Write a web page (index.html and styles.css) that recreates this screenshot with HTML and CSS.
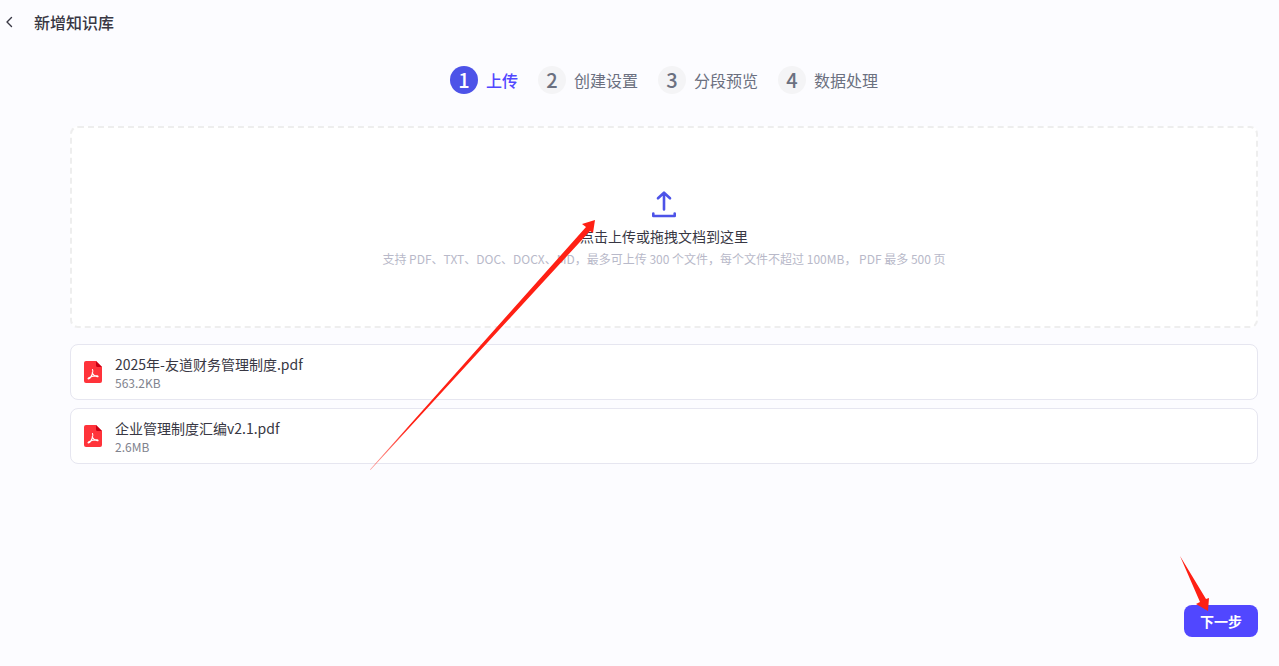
FILE: index.html
```
<!DOCTYPE html>
<html lang="zh-CN">
<head>
    <meta charset="UTF-8">
    <meta name="viewport" content="width=device-width, initial-scale=1.0">
    <link rel="stylesheet" href="styles.css">
    <title>新增知识库</title>
</head>
<body>
    <header class="header">
        <button class="back" type="button" aria-label="返回">
            <svg width="8" height="12" viewBox="0 0 8 12" fill="none" stroke="#383743" stroke-width="1.4" stroke-linecap="round" stroke-linejoin="round">
                <path d="M5.500 1.500 1 6 5.500 10.500"/>
            </svg>
        </button>
        <h1 class="title">新增知识库</h1>
    </header>

    <main class="content">
        <ol class="steps">
            <li class="step active"><span class="step-num">1</span>上传</li>
            <li class="step"><span class="step-num">2</span>创建设置</li>
            <li class="step"><span class="step-num">3</span>分段预览</li>
            <li class="step"><span class="step-num">4</span>数据处理</li>
        </ol>

        <div class="upload">
            <input class="upload-input" type="file" id="file" multiple accept=".pdf,.txt,.doc,.docx,.md">
            <label class="dropzone" for="file">
                <svg class="upload-icon" width="32" height="32" viewBox="0 0 32 32" fill="none" stroke="#4d53e8" stroke-width="2.6" stroke-linecap="round" stroke-linejoin="round">
                    <path d="M16 21.500V5.500M10 10.300 16 4.700l6 5.600"/>
                    <path d="M5.300 25.500v2.500h21.400V25.500"/>
                </svg>
                <span class="upload-text">点击上传或拖拽文档到这里</span>
                <span class="upload-hint">支持 PDF、TXT、DOC、DOCX、MD，最多可上传 300 个文件，每个文件不超过 100MB， PDF 最多 500 页</span>
            </label>
            <svg class="arrow arrow-upload" width="226" height="250" viewBox="0 0 226 250">
                <defs>
                    <linearGradient id="tail" gradientUnits="userSpaceOnUse" x1="0" y1="250" x2="40" y2="206">
                        <stop offset="0" stop-color="#ff2014" stop-opacity="0.4"/>
                        <stop offset="1" stop-color="#ff2014"/>
                    </linearGradient>
                </defs>
                <path fill="url(#tail)" d="M0 249.500 216 7 212 4 225 0 223 13 220 11 .5 250Z"/>
            </svg>
        </div>

        <ul class="files">
            <li class="file">
                <svg class="file-icon" width="24" height="24" viewBox="0 0 24 24">
                    <path fill="#ff333a" d="M5 1h10l6 6v14a2 2 0 0 1-2 2H5a2 2 0 0 1-2-2V3a2 2 0 0 1 2-2z"/>
                    <path fill="#c90014" d="M15 1l6 6h-4.500a1.500 1.500 0 0 1-1.500-1.500z"/>
                    <path fill="none" stroke="#fff" stroke-width="1.100" stroke-linecap="round" stroke-linejoin="round" d="M11.500 9.500c.9 1.300.4 3-.3 4.800-.8 2-2.200 4.200-3.800 4.700-.8 0-.3-1 1-1.600 2.200-1 5.300-1.700 7.900-1.500 1.200.3.800.9-.1.700-2-.4-4.200-1.700-5.100-3.600"/>
                </svg>
                <div class="file-info">
                    <span class="file-name">2025年-友道财务管理制度.pdf</span>
                    <span class="file-size">563.2KB</span>
                </div>
            </li>
            <li class="file">
                <svg class="file-icon" width="24" height="24" viewBox="0 0 24 24">
                    <path fill="#ff333a" d="M5 1h10l6 6v14a2 2 0 0 1-2 2H5a2 2 0 0 1-2-2V3a2 2 0 0 1 2-2z"/>
                    <path fill="#c90014" d="M15 1l6 6h-4.500a1.500 1.500 0 0 1-1.500-1.500z"/>
                    <path fill="none" stroke="#fff" stroke-width="1.100" stroke-linecap="round" stroke-linejoin="round" d="M11.500 9.500c.9 1.300.4 3-.3 4.800-.8 2-2.200 4.200-3.800 4.700-.8 0-.3-1 1-1.600 2.200-1 5.300-1.700 7.900-1.500 1.200.3.800.9-.1.700-2-.4-4.200-1.700-5.100-3.600"/>
                </svg>
                <div class="file-info">
                    <span class="file-name">企业管理制度汇编v2.1.pdf</span>
                    <span class="file-size">2.6MB</span>
                </div>
            </li>
        </ul>
    </main>

    <footer class="footer">
        <div class="next-wrap">
            <button class="next" type="button">下一步</button>
            <svg class="arrow arrow-next" width="30" height="56" viewBox="0 0 30 56">
                <path fill="#ff2014" d="M0 0 26 43 29 42 28 55 16 48 20 46Z"/>
            </svg>
        </div>
    </footer>
</body>
</html>
```
FILE: styles.css
```
* {
    box-sizing: border-box;
}

body {
    display: flex;
    flex-direction: column;
    min-height: 100vh;
    margin: 0;
    background-color: #fcfcff;
    color: #383743;
    font-family: "Noto Sans CJK SC", sans-serif;
    font-size: 14px;
}

button {
    padding: 0;
    border: none;
    font-family: inherit;
    cursor: pointer;
}

ol, ul {
    margin: 0;
    padding: 0;
    list-style: none;
}

.header {
    display: flex;
    align-items: center;
    gap: 16px;
    height: 44px;
    padding-left: 2px;
}

.back {
    display: flex;
    align-items: center;
    justify-content: center;
    width: 16px;
    height: 24px;
    background: none;
}

.title {
    margin: 0;
    font-size: 16px;
    font-weight: 500;
    line-height: 24px;
}

.content {
    padding: 22px 21px 0 70px;
}

/* steps */
.steps {
    display: flex;
    justify-content: center;
    gap: 20px;
}

.step {
    display: flex;
    align-items: center;
    gap: 8px;
    color: #6b7080;
    font-size: 16px;
    line-height: 28px;
}

.step-num {
    width: 28px;
    height: 28px;
    border-radius: 50%;
    background-color: #f4f4f6;
    font-size: 20px;
    font-weight: 500;
    text-align: center;
}

.step.active {
    color: #5147ff;
    font-weight: 500;
}

.active .step-num {
    background-color: #4d53e8;
    color: #fff;
}

/* upload area */
.upload {
    position: relative;
    margin-top: 32px;
}

.upload-input {
    position: absolute;
    width: 1px;
    height: 1px;
    opacity: 0;
}

.dropzone {
    display: flex;
    flex-direction: column;
    align-items: center;
    padding: 60px 16px 58px;
    border: 2px dashed #eee;
    border-radius: 8px;
    background-color: #fff;
    cursor: pointer;
}

.upload-text {
    margin-top: 6px;
    line-height: 20px;
}

.upload-hint {
    margin-top: 4px;
    color: #b8b9c9;
    font-size: 12px;
    line-height: 18px;
}

/* files */
.files {
    display: flex;
    flex-direction: column;
    gap: 8px;
    margin-top: 16px;
}

.file {
    display: flex;
    align-items: center;
    gap: 10px;
    padding: 8px 10px;
    border: 1px solid #e6e6f0;
    border-radius: 8px;
    background-color: #fff;
}

.file-info {
    display: flex;
    flex-direction: column;
}

.file-name {
    line-height: 22px;
}

.file-size {
    color: #80838e;
    font-size: 12px;
    line-height: 16px;
}

/* footer */
.footer {
    display: flex;
    justify-content: flex-end;
    margin-top: auto;
    padding: 0 21px 29px;
}

.next-wrap {
    position: relative;
}

.next {
    display: block;
    height: 32px;
    padding: 0 16px;
    border-radius: 8px;
    background-color: #5147ff;
    color: #fff;
    font-size: 14px;
    font-weight: 700;
    line-height: 20px;
}

/* red arrows over the page */
.arrow {
    position: absolute;
    pointer-events: none;
}

.arrow-upload {
    top: 94px;
    right: calc(50% + 68px);
}

.arrow-next {
    top: -49px;
    left: -4px;
}
```
